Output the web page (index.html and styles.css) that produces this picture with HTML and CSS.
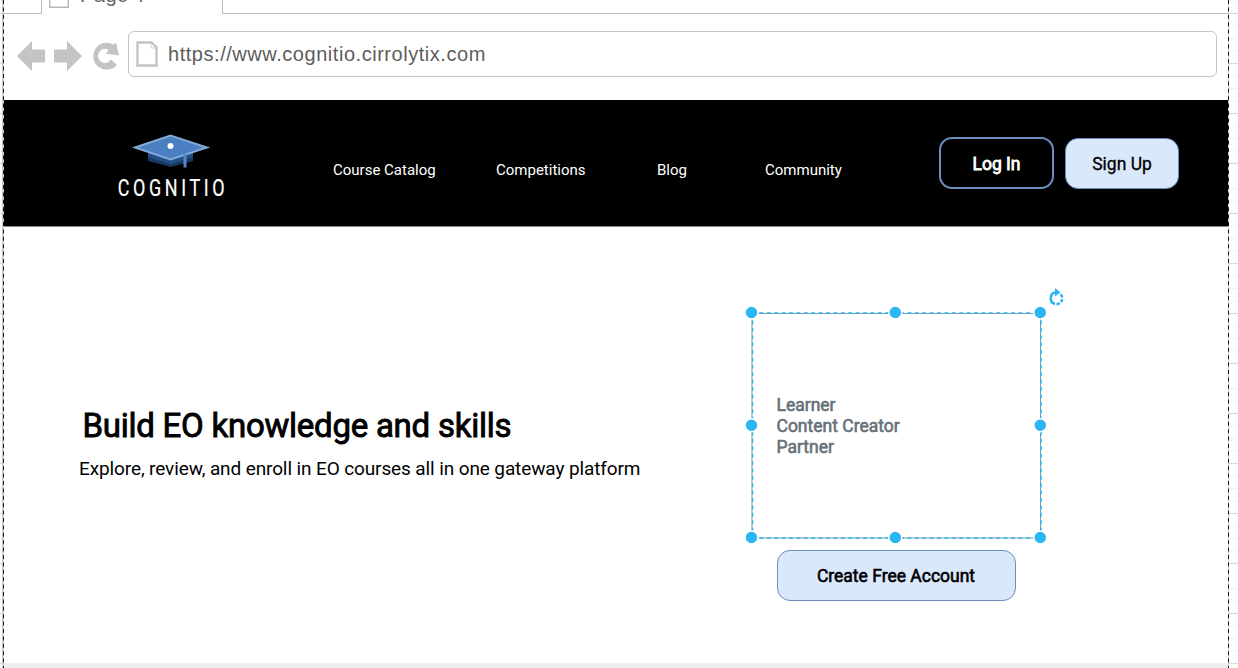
FILE: index.html
```html
<!DOCTYPE html>
<html lang="en">
<head>
<meta charset="utf-8">
<title>Cognitio</title>
<link rel="stylesheet" href="styles.css">
</head>
<body>
<div class="canvas">
  <div class="gutter gutter-left"></div>
  <main class="page">
    <svg class="edge edge-left" width="2" height="668"><path d="M1 0V668"/></svg>
    <svg class="edge edge-right" width="2" height="668"><path d="M1 0V668"/></svg>
    <div class="tabs">
      <div class="tab-prev"></div>
      <div class="tab">
        <svg class="tab-icon" width="20" height="9"><path d="M.7 0V7.300H19.300V0"/></svg>
        <span class="tab-title">Page <span class="tab-number">1</span></span>
      </div>
      <div class="tab-rest"></div>
    </div>
    <div class="toolbar">
      <svg class="nav-icons" width="110" height="36" viewBox="0 0 110 36">
        <path d="M0 18 15 3V11.500H28V24.500H15V33Z"/>
        <path d="M37 11.500H50V3L65 18 50 33V24.500H37Z"/>
        <path d="M97.500 6.500A13.500 13.500 0 1 0 101 27L95 21.500A7 7 0 1 1 92.500 11.800L90 15.800 103 17.500 100 4.500Z" transform="translate(-1 0)"/>
      </svg>
      <div class="address">
        <svg width="22" height="26"><path class="sheet" d="M1.500 1.500H15.500L20.500 6.500V24.500H1.500Z"/><path class="fold" d="M15 2V7H20"/></svg>
        <span class="url">https://www.cognitio.cirrolytix.com</span>
      </div>
    </div>
    <header class="site-header">
      <svg class="logo" width="110" height="66" viewBox="0 0 110 66">
        <path fill="#17395f" d="M30 18V28L53 34 75 28V18Z"/>
        <path fill="#214f86" d="M30 18V24L53 31.500 75 24V18Z"/>
        <path fill="#4a7fc1" stroke="#83a9d8" stroke-width="2" d="M17 14.500 52.500 2.500 89 14.500 52.500 26.500Z"/>
        <path fill="#5588c4" d="M65.500 21H68.500V34.500H65.500Z"/>
        <circle cx="52.500" cy="13" r="3" fill="#fff"/>
        <text class="wordmark" transform="translate(-.2 63) scale(.78 1)" textLength="137" lengthAdjust="spacing">COGNITIO</text>
      </svg>
      <nav class="menu">
        <a class="courses">Course Catalog</a>
        <a class="competitions">Competitions</a>
        <a class="blog">Blog</a>
        <a class="community">Community</a>
      </nav>
      <div class="actions">
        <button class="button login">Log In</button>
        <button class="button signup">Sign Up</button>
      </div>
    </header>
    <section class="hero">
      <div class="pitch">
        <h1>Build EO knowledge and skills</h1>
        <p>Explore, review, and enroll in EO courses all in one gateway platform</p>
      </div>
      <div class="enroll">
        <div class="roles">
          <svg class="selection" width="320" height="260" viewBox="740 284 320 260">
            <path class="outline" d="M752 313.500H1040.500V538H752Z"/>
            <path class="dashes" d="M752 313H1041M752 538H1041M752.500 313V538M1041 313V538"/>
            <g class="handles">
              <circle cx="751.500" cy="312.500" r="6.500"/><circle cx="895.300" cy="312.500" r="6.500"/><circle cx="1040.300" cy="312.500" r="6.500"/>
              <circle cx="751.500" cy="425.200" r="6.500"/><circle cx="1040.300" cy="425.200" r="6.500"/>
              <circle cx="751.500" cy="537.500" r="6.500"/><circle cx="895.300" cy="537.500" r="6.500"/><circle cx="1040.300" cy="537.500" r="6.500"/>
            </g>
          </svg>
          <svg class="rotate" width="18" height="20" viewBox="0 0 18 20">
            <path class="arc" d="M8 4.300A6 6 0 0 0 7 16"/>
            <path class="arc" d="M8.500 16.200A6 6 0 0 0 11.800 15M12.900 13.900A6 6 0 0 0 14.200 11M14.200 9.500A6 6 0 0 0 12.600 6.300"/>
            <path class="tip" d="M7 0 12.500 4.500 7 8.500Z"/>
          </svg>
          <div>Learner</div>
          <div>Content Creator</div>
          <div>Partner</div>
        </div>
        <button class="button create">Create Free Account</button>
      </div>
    </section>
    <div class="scrollbar"></div>
  </main>
  <div class="gutter gutter-right"></div>
</div>
</body>
</html>
```

FILE: styles.css
```css
* { box-sizing: border-box; }
body { margin: 0; overflow: hidden; background: #fff; font-family: Roboto, sans-serif; }
.canvas { display: grid; grid-template-columns: 3px 1226px 9px; height: 668px; }
.gutter {
  background:
    repeating-linear-gradient(#d9d9db 0 1px, transparent 1px 50px) 0 13px,
    repeating-linear-gradient(#f4f4f4 0 1px, transparent 1px 12.5px) 0 .5px;
}
.gutter-left { border-right: 1px solid #c8cbd2; }
.page { position: relative; display: flex; flex-direction: column; padding: 0 1px; }
.edge { position: absolute; top: 0; z-index: 2; background: #cdd0da; }
.edge path { stroke: #14141f; stroke-width: 2; stroke-dasharray: 4 3.4; }
.edge-left { left: 0; width: 1px; }
.edge-right { right: 0; width: 1px; }

.tabs { display: flex; height: 14px; }
.tab-prev { width: 38px; border: solid #bdbdbd; border-width: 0 1px 1px 0; }
.tab { display: flex; width: 180px; padding-left: 7px; }
.tab-icon { fill: none; stroke: #b8b8b8; stroke-width: 1.4; }
.tab-title { margin: -17px 0 0 11px; font: 20px/24px "Liberation Sans", sans-serif; letter-spacing: .5px; color: #666; }
.tab-number { font-family: Roboto, sans-serif; }
.tab-rest { flex: 1; border: solid #bdbdbd; border-width: 0 0 1px 1px; }

.toolbar { display: flex; height: 86px; padding: 17px 0 0 13px; }
.nav-icons { margin-top: 7px; fill: #c4c4c4; }
.address { display: flex; align-items: center; width: 1089px; height: 46px; margin-left: 1px; padding-left: 7px; border: 1.500px solid #c6c6c6; border-radius: 6px; }
.sheet { fill: none; stroke: #c4c4c4; stroke-width: 2.400; }
.fold { fill: none; stroke: #d0d0d0; }
.url { margin-left: 10px; font: 20px/24px "Liberation Sans", sans-serif; letter-spacing: .54px; color: #5d5d5d; }

.site-header { display: flex; height: 127px; background: #000; border-bottom: 1px solid #8a8a8a; color: #fff; }
.logo { margin: 33px 0 0 114px; overflow: visible; }
.wordmark { fill: #fff; font-size: 23px; stroke: #fff; stroke-width: .2px; }
.menu { display: flex; margin: 60px 0 0 105px; font-size: 15px; line-height: 20px; white-space: nowrap; }
.courses { width: 163px; }
.competitions { width: 161px; }
.blog { width: 108px; }
.community { width: 174px; }
.actions { display: flex; align-items: center; height: 52px; margin-top: 37px; gap: 11px; }
.button { height: 51px; padding: 2px 0 0; border: 1px solid #6c8ebf; border-radius: 13px; background: #dae8fc; color: #000; font: 17.500px/22px Roboto, sans-serif; -webkit-text-stroke: .3px; }
.login { width: 115px; height: 52px; border-width: 2.500px; background: #000; color: #fff; -webkit-text-stroke: .8px; }
.signup { width: 114px; }

.hero { display: flex; height: 436px; }
.pitch { width: 772.500px; padding: 179px 0 0 75px; }
.pitch h1 { margin: 0 0 0 3.500px; font-size: 33px; line-height: 40px; font-weight: 400; letter-spacing: -.25px; -webkit-text-stroke: .9px; }
.pitch p { margin: 11px 0 0; font-size: 19px; line-height: 24px; letter-spacing: -.115px; }
.enroll { padding-top: 168px; }
.roles { position: relative; height: 155px; color: #66707a; font-size: 17.500px; line-height: 21px; -webkit-text-stroke: .6px; }
.selection { position: absolute; left: -36.500px; top: -111px; }
.outline { fill: none; stroke: #8099aa; stroke-width: 1; }
.dashes { fill: none; stroke: #29b6f2; stroke-width: 1.500; stroke-dasharray: 4 3.4; }
.handles { fill: #29b6f2; stroke: #fff; stroke-width: 1.500; }
.rotate { position: absolute; left: 271px; top: -107px; }
.arc { fill: none; stroke: #29b6f2; stroke-width: 2.500; }
.tip { fill: #29b6f2; }
.create { width: 239px; padding-top: 0; -webkit-text-stroke: .6px; }
.scrollbar { flex: 1; background: #eee; }
```
